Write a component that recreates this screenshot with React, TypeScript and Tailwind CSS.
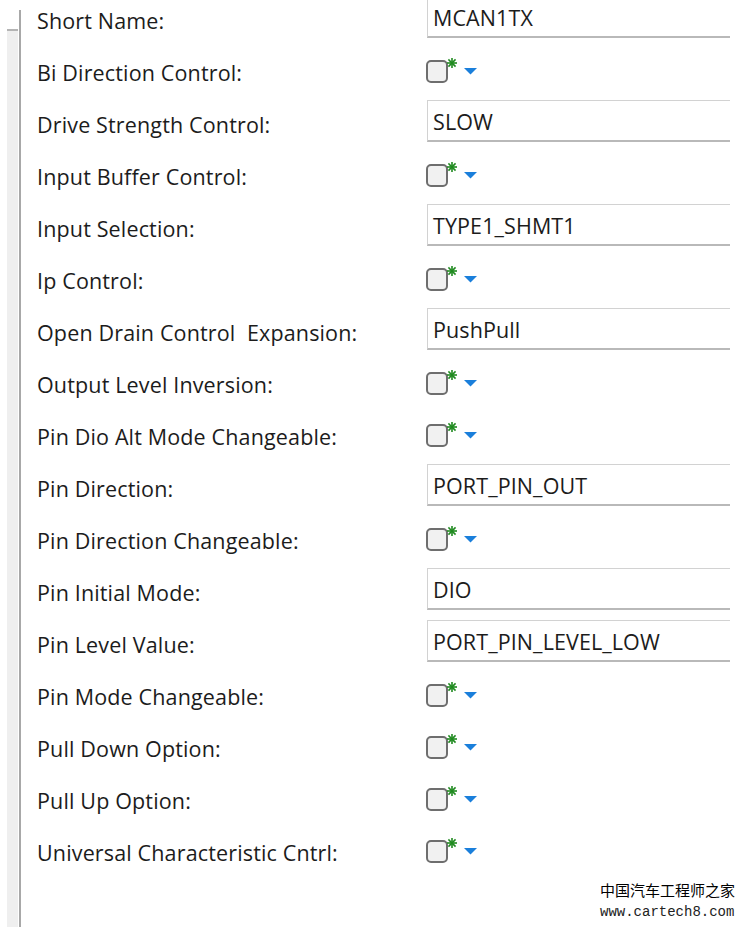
import React from 'react';

// Port pin configuration form (property editor style)
type Field =
  | { label: string; kind: 'text'; value: string }
  | { label: string; kind: 'check' };

const fields: Field[] = [
  { label: 'Short Name:', kind: 'text', value: 'MCAN1TX' },
  { label: 'Bi Direction Control:', kind: 'check' },
  { label: 'Drive Strength Control:', kind: 'text', value: 'SLOW' },
  { label: 'Input Buffer Control:', kind: 'check' },
  { label: 'Input Selection:', kind: 'text', value: 'TYPE1_SHMT1' },
  { label: 'Ip Control:', kind: 'check' },
  { label: 'Open Drain Control\u00a0 Expansion:', kind: 'text', value: 'PushPull' },
  { label: 'Output Level Inversion:', kind: 'check' },
  { label: 'Pin Dio Alt Mode Changeable:', kind: 'check' },
  { label: 'Pin Direction:', kind: 'text', value: 'PORT_PIN_OUT' },
  { label: 'Pin Direction Changeable:', kind: 'check' },
  { label: 'Pin Initial Mode:', kind: 'text', value: 'DIO' },
  { label: 'Pin Level Value:', kind: 'text', value: 'PORT_PIN_LEVEL_LOW' },
  { label: 'Pin Mode Changeable:', kind: 'check' },
  { label: 'Pull Down Option:', kind: 'check' },
  { label: 'Pull Up Option:', kind: 'check' },
  { label: 'Universal Characteristic Cntrl:', kind: 'check' },
];

const Asterisk: React.FC = () => (
  <svg width="10" height="10" viewBox="0 0 10 10" className="-ml-[1px] -mt-[2px] self-start">
    <g stroke="#1f8a1f" strokeWidth="1.6" strokeLinecap="square">
      <line x1="5" y1="0.8" x2="5" y2="9.2" />
      <line x1="0.8" y1="5" x2="9.2" y2="5" />
      <line x1="2" y1="2" x2="8" y2="8" />
      <line x1="8" y1="2" x2="2" y2="8" />
    </g>
  </svg>
);

const CheckCell: React.FC = () => (
  <div className="flex items-start pt-[14px] -ml-[1px]">
    <div className="w-[22px] h-[23px] rounded-[5px] border-2 border-[#6e6e6e] bg-[#f1f1f1]" />
    <Asterisk />
    <svg width="13" height="7" viewBox="0 0 13 7" className="ml-[7px] mt-[8px]">
      <polygon points="0,0 13,0 6.5,6.5" fill="#1a7fdb" />
    </svg>
  </div>
);

const TextCell: React.FC<{ value: string }> = ({ value }) => (
  <div className="pt-[2px] flex-1">
    <div className="h-[42px] border border-r-0 border-[#d2d2d2] border-b-[#b9b9b9] border-b-2 bg-white pl-[5px] pt-[3px] flex items-center text-[21.5px] tracking-[0.1px] text-[#1c1c1c] leading-none">
      {value}
    </div>
  </div>
);

const App: React.FC = () => {
  return (
    <div className="w-[746px] h-[927px] bg-white overflow-hidden relative flex" style={{ fontFamily: '"Open Sans", "Noto Sans", sans-serif' }}>
      {/* left gutter */}
      <div className="w-[21px] shrink-0 flex pl-[7px]">
        <div className="w-[11px] flex flex-col pt-[29px]">
          <div className="h-[2px] bg-[#b4b4b4]" />
          <div className="flex-1 bg-[#efefef]" />
        </div>
        <div className="w-[2px] mt-[10px] bg-[#a8a8a8] ml-[1px]" />
      </div>

      <div className="flex-1 pl-[16px] -mt-[6px] pr-[16px]">
        {fields.map((f) => (
          <div key={f.label} className="h-[52px] flex">
            <div className="w-[390px] shrink-0 text-[21.5px] tracking-[0.15px] text-[#1c1c1c] leading-[53px] whitespace-pre">
              {f.label}
            </div>
            {f.kind === 'text' ? <TextCell value={f.value} /> : <CheckCell />}
          </div>
        ))}
      </div>

      {/* watermark */}
      <div className="absolute left-[600px] top-[882px] leading-none">
        <div className="text-[15px] text-black" style={{ fontFamily: '"Noto Sans CJK SC", serif' }}>
          中国汽车工程师之家
        </div>
        <div className="mt-[8px] text-[14px] text-[#222]" style={{ fontFamily: '"Liberation Mono", monospace' }}>
          www.cartech8.com
        </div>
      </div>
    </div>
  );
};

export default App;
